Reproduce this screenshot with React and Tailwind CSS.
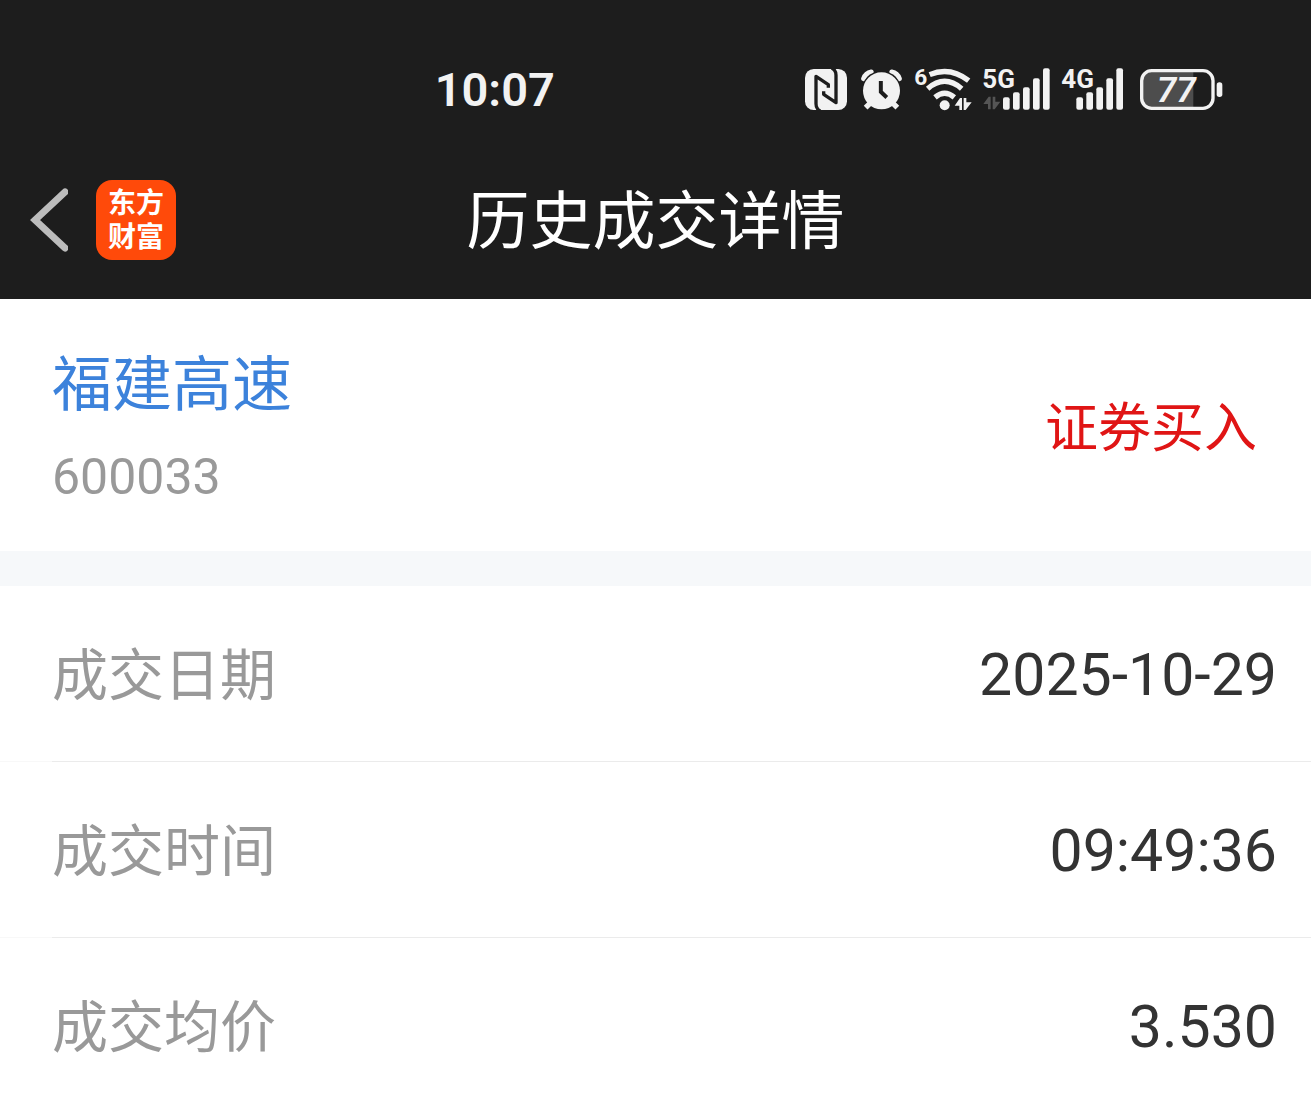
const details = [
  { label: '成交日期', value: '2025-10-29' },
  { label: '成交时间', value: '09:49:36' },
  { label: '成交均价', value: '3.530' },
];

function NfcIcon() {
  return (
    <svg viewBox="0 0 132 123" className="w-11 h-[41px]" aria-hidden="true">
      <rect width="126" height="123" rx="26" fill="#f2f2f2" />
      <g fill="none" stroke="#1d1d1d" strokeWidth="10" strokeLinejoin="round">
        <path d="M46 126q-13-6-13-22V22L70 47V56" />
        <path d="M80-3q13 6 13 22V101L56 76V67" />
      </g>
    </svg>
  );
}

function AlarmIcon() {
  return (
    <svg viewBox="0 0 124 124" className="w-[41px] h-[41px]" aria-hidden="true">
      <g fill="none" stroke="#f2f2f2">
        <path d="M8 29Q14 12 31 9M116 29Q110 12 93 9" strokeWidth="15" strokeLinecap="round" />
      </g>
      <circle cx="62" cy="66" r="60" fill="#1d1d1d" />
      <path d="M31 100L14 117M93 100l17 17" stroke="#f2f2f2" strokeWidth="16" />
      <circle cx="62" cy="66" r="56" fill="#f2f2f2" />
      <path d="M60 36v33l18 17" fill="none" stroke="#1d1d1d" strokeWidth="12" />
    </svg>
  );
}

function WifiIcon() {
  return (
    <svg viewBox="0 0 171 129" className="w-[57px] h-[43px] overflow-visible" aria-hidden="true">
      <text x="1" y="50" fontSize="68" fontWeight="700" fill="#f2f2f2" className="font-[Roboto,sans-serif]">6</text>
      <g fill="none" stroke="#f2f2f2" strokeWidth="16">
        <path d="M47 20Q108-6 164 38" />
        <path d="M41 62Q92 18 143 62" />
        <path d="M63 88Q92 64 121 88" />
      </g>
      <circle cx="92" cy="112" r="15" fill="#f2f2f2" />
      <path d="M122 113l16-23h6v36h-8v-13zM149 90h8v13h16l-18 23h-6z" fill="#f2f2f2" />
    </svg>
  );
}

function Bars({ x }) {
  return (
    <g transform={`translate(${x} 0)`} fill="#f2f2f2">
      <rect x="0" y="88" width="20" height="37" rx="6" />
      <rect x="30" y="73" width="20" height="52" rx="6" />
      <rect x="60" y="58" width="20" height="67" rx="6" />
      <rect x="90" y="31" width="20" height="94" rx="6" />
      <rect x="120" y="1" width="20" height="124" rx="6" />
    </g>
  );
}

function Signal5G() {
  return (
    <svg viewBox="0 0 201 126" className="w-[67px] h-[42px] overflow-visible" aria-hidden="true">
      <text x="-2" y="61" fontSize="78" fontWeight="700" fill="#f2f2f2" className="font-[Roboto,sans-serif]">5G</text>
      <path d="M1 108l16-22h6v38h-8v-16zM29 86h8v15h15l-17 23h-6z" fill="#555" />
      <Bars x={60} />
    </svg>
  );
}

function Signal4G() {
  return (
    <svg viewBox="0 0 198 126" className="w-[66px] h-[42px] overflow-visible" aria-hidden="true">
      <text x="-2" y="61" fontSize="78" fontWeight="700" fill="#f2f2f2" className="font-[Roboto,sans-serif]">4G</text>
      <Bars x={43} />
    </svg>
  );
}

function Battery() {
  return (
    <svg viewBox="0 0 249 123" className="w-[83px] h-[41px]" aria-hidden="true">
      <path d="M34 5H160V118H34Q5 118 5 89V34Q5 5 34 5z" fill="#4d4d4d" />
      <rect x="5" y="5" width="214" height="113" rx="30" fill="none" stroke="#f2f2f2" strokeWidth="10" />
      <rect x="230" y="40" width="17" height="44" rx="8" fill="#f2f2f2" />
      <text x="109" y="99" textAnchor="middle" fontSize="106" fontWeight="600" fontStyle="italic" fill="#f2f2f2" className="font-[Roboto,sans-serif]">77</text>
    </svg>
  );
}

function StatusBar() {
  return (
    <div className="flex items-center justify-between pl-[33%] pr-[88px] pt-9 h-[142px]">
      <time className="px-0.5 pt-0.5 font-[Roboto,sans-serif] text-[47px] font-semibold text-[#f2f2f2]">10:07</time>
      <div className="flex items-center gap-3">
        <NfcIcon />
        <AlarmIcon />
        <WifiIcon />
        <Signal5G />
        <Signal4G />
        <Battery />
      </div>
    </div>
  );
}

function NavBar() {
  return (
    <div className="grid grid-cols-[1fr_auto_1fr] items-center h-[157px] px-[30px] pb-0.5">
      <div className="flex items-center gap-7">
        <button type="button" aria-label="返回">
          <svg viewBox="0 0 38 64" className="w-[38px] h-16" aria-hidden="true">
            <path d="M35 4L5 32l30 28" fill="none" stroke="#bcbcbc" strokeWidth="7" strokeLinecap="round" />
          </svg>
        </button>
        <div className="size-20 rounded-2xl bg-[#ff4a0a] pt-1 text-center text-[28px] leading-[34px] font-bold text-white">
          东方<br />财富
        </div>
      </div>
      <h1 className="pb-2 text-[63px] leading-none text-white">历史成交详情</h1>
    </div>
  );
}

export default function App() {
  return (
    <div className="min-h-screen bg-white font-['Noto_Sans_CJK_SC',sans-serif]">
      <header className="bg-[#1d1d1d]">
        <StatusBar />
        <NavBar />
      </header>

      <section className="flex items-center justify-between h-[252px] pl-[52px] pr-[54px]">
        <div className="pt-4">
          <h2 className="text-[60px] leading-[84px] text-[#3c82db]">福建高速</h2>
          <p className="pt-1 font-[Roboto,sans-serif] text-[50px] leading-[102px] text-[#999]">600033</p>
        </div>
        <span className="text-[53px] text-[#e01515]">证券买入</span>
      </section>

      <div className="h-[35px] bg-[#f6f8fa]" />

      <dl>
        {details.map(d => (
          <div key={d.label}>
            <div className="flex items-center justify-between h-[175px] pl-[52px] pr-[34px]">
              <dt className="pb-1.5 text-[56px] text-[#999]">{d.label}</dt>
              <dd className="pt-1 font-[Roboto,sans-serif] text-[59px] text-[#333]">{d.value}</dd>
            </div>
            <div className="flex h-px bg-[#f8f8f8]">
              <div className="ml-[52px] flex-1 bg-[#ebebeb]" />
            </div>
          </div>
        ))}
      </dl>
    </div>
  );
}
